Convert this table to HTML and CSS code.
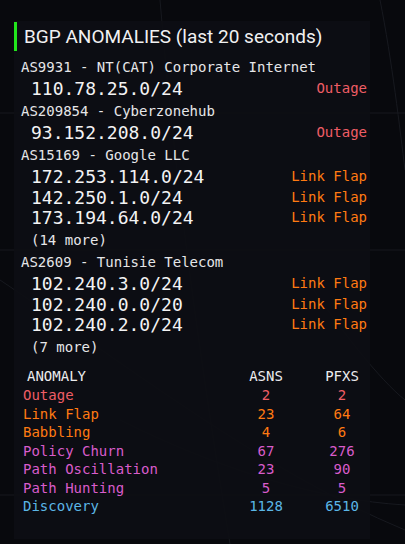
FILE: index.html
```html
<!DOCTYPE html>
<html>
<head>
<meta charset="utf-8">
<link rel="stylesheet" href="styles.css">
</head>
<body>
<svg class="bg-lines" width="405" height="544" viewBox="0 0 405 544">
  <path d="M0 113 H405" />
  <path d="M0 250 H405" />
  <path d="M0 495 H405" />
  <path d="M160 0 C175 180 200 360 230 544" />
  <path d="M0 280 C120 360 260 470 405 530" />
  <path d="M120 420 C220 470 320 500 405 505" />
  <path d="M300 270 C340 330 380 380 405 400" />
  <path d="M380 0 C392 60 400 130 405 170" />
</svg>
<main class="panel">
  <h1 class="title">BGP ANOMALIES (last 20 seconds)</h1>

  <section class="group">
    <div class="asn">AS9931 - NT(CAT) Corporate Internet</div>
    <ul class="prefixes">
      <li class="prefix"><span class="net">110.78.25.0/24</span><span class="tag outage">Outage</span></li>
    </ul>
  </section>

  <section class="group">
    <div class="asn">AS209854 - Cyberzonehub</div>
    <ul class="prefixes">
      <li class="prefix"><span class="net">93.152.208.0/24</span><span class="tag outage">Outage</span></li>
    </ul>
  </section>

  <section class="group">
    <div class="asn">AS15169 - Google LLC</div>
    <ul class="prefixes">
      <li class="prefix"><span class="net">172.253.114.0/24</span><span class="tag flap">Link Flap</span></li>
      <li class="prefix"><span class="net">142.250.1.0/24</span><span class="tag flap">Link Flap</span></li>
      <li class="prefix"><span class="net">173.194.64.0/24</span><span class="tag flap">Link Flap</span></li>
    </ul>
    <div class="more">(14 more)</div>
  </section>

  <section class="group">
    <div class="asn">AS2609 - Tunisie Telecom</div>
    <ul class="prefixes">
      <li class="prefix"><span class="net">102.240.3.0/24</span><span class="tag flap">Link Flap</span></li>
      <li class="prefix"><span class="net">102.240.0.0/20</span><span class="tag flap">Link Flap</span></li>
      <li class="prefix"><span class="net">102.240.2.0/24</span><span class="tag flap">Link Flap</span></li>
    </ul>
    <div class="more">(7 more)</div>
  </section>

  <div class="stats">
    <div class="head label">ANOMALY</div><div class="head num">ASNS</div><div class="head num">PFXS</div>
    <div class="label c-outage">Outage</div><div class="num c-outage">2</div><div class="num c-outage">2</div>
    <div class="label c-flap">Link Flap</div><div class="num c-flap">23</div><div class="num c-flap">64</div>
    <div class="label c-flap">Babbling</div><div class="num c-flap">4</div><div class="num c-flap">6</div>
    <div class="label c-pink">Policy Churn</div><div class="num c-pink">67</div><div class="num c-pink">276</div>
    <div class="label c-pink">Path Oscillation</div><div class="num c-pink">23</div><div class="num c-pink">90</div>
    <div class="label c-pink">Path Hunting</div><div class="num c-pink">5</div><div class="num c-pink">5</div>
    <div class="label c-blue">Discovery</div><div class="num c-blue">1128</div><div class="num c-blue">6510</div>
  </div>
</main>
</body>
</html>
```

FILE: styles.css
```css
html, body {
  margin: 0;
  padding: 0;
  background: #08090d;
  width: 405px;
  height: 544px;
  overflow: hidden;
}

body {
  position: relative;
  font-family: "DejaVu Sans Mono", "Liberation Mono", monospace;
  color: #e9e9ea;
}

.bg-lines {
  position: absolute;
  left: 0;
  top: 0;
  z-index: 0;
}

.bg-lines path {
  fill: none;
  stroke: #17191f;
  stroke-width: 1;
}

.panel {
  position: relative;
  z-index: 1;
  margin: 21px 0 0 14px;
  width: 356px;
  height: 518px;
  box-sizing: border-box;
  background: rgba(13, 14, 19, 0.92);
  padding: 1px 3px 0 7px;
}

.title {
  margin: 0 0 6px -7px;
  height: 29px;
  border-left: 3px solid #22e51c;
  padding-left: 7px;
  font-family: Roboto, "Noto Sans", sans-serif;
  font-weight: 400;
  font-size: 19px;
  line-height: 29px;
  color: #f1f1f2;
  white-space: nowrap;
}

.group {
  margin-bottom: 1.5px;
}

.asn {
  font-size: 14px;
  line-height: 20px;
  color: #e6e6e8;
  white-space: nowrap;
}

.prefixes {
  list-style: none;
  margin: 0;
  padding: 2px 0 0 10px;
}

.prefix {
  display: flex;
  justify-content: space-between;
  align-items: flex-start;
  height: 20.5px;
}

.net {
  font-size: 18px;
  line-height: 20.5px;
  color: #f3f3f4;
}

.tag {
  font-size: 14px;
  line-height: 18px;
}

.outage { color: #ef5d66; }
.flap { color: #ff7a12; }

.more {
  padding-left: 10px;
  font-size: 14px;
  line-height: 22px;
  color: #e6e6e8;
}

.stats {
  display: grid;
  grid-template-columns: 199px 60px 60px;
  column-gap: 16px;
  margin-top: 8.5px;
  font-size: 14px;
  line-height: 18.5px;
}

.head {
  line-height: 20px;
  color: #ececee;
}

.label {
  padding-left: 2px;
  white-space: nowrap;
}

.head.label {
  padding-left: 6px;
}

.num {
  text-align: center;
}

.c-outage { color: #ef5d66; }
.c-flap { color: #ff7a12; }
.c-pink { color: #d95ccb; }
.c-blue { color: #5bb6e6; }
```
